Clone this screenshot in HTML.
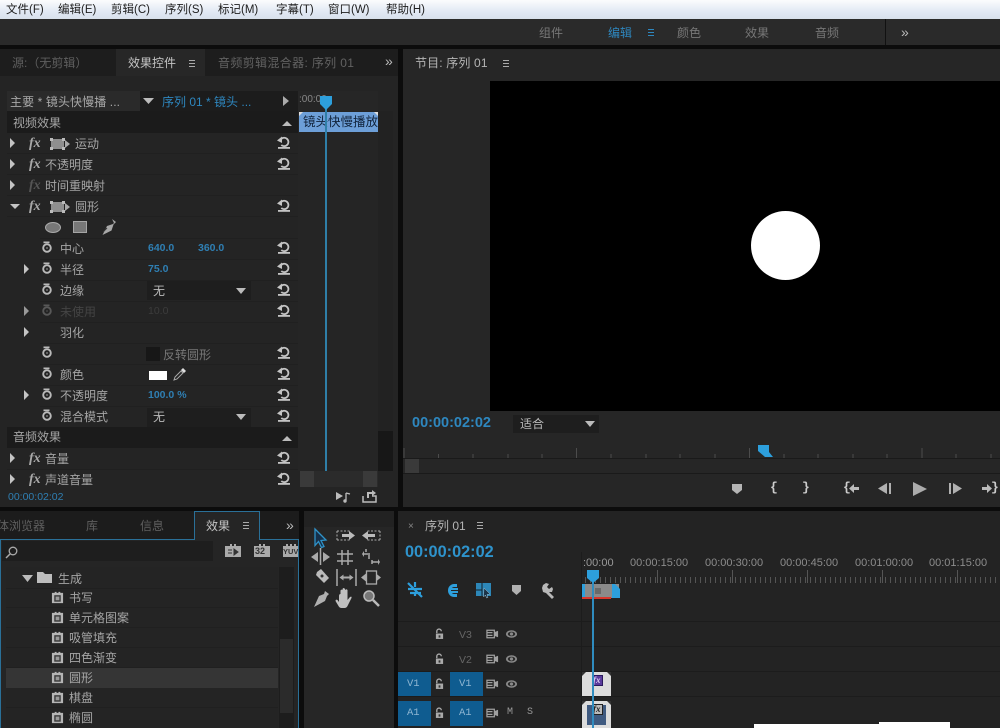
<!DOCTYPE html>
<html><head><meta charset="utf-8"><style>
*{box-sizing:border-box}
html,body{margin:0;padding:0}
body{width:1000px;height:728px;overflow:hidden;position:relative;background:#0c0c0c;font-family:"Liberation Sans","Noto Sans CJK SC",sans-serif;font-size:12px;color:#a5a5a5}
.b{position:absolute}
.t{position:absolute;white-space:nowrap;line-height:14px;font-size:12px;filter:blur(.3px)}
.blue{color:#2f7fb3}
.m{color:#202020;font-size:11.5px;top:3px}
svg.i{position:absolute;overflow:visible}
.fx{position:absolute;font:italic bold 14px "Liberation Serif",serif;color:#a8a8a8;line-height:14px}
.line{position:absolute;height:1px;background:#202020}
.r{font-size:11px;color:#8c8c8c;top:556px}
</style></head><body>
<svg width="0" height="0" style="position:absolute"><defs>
<symbol id="rs" viewBox="0 0 14 14"><path d="M3.500 5a4.200 4.200 0 1 1 .8 5" fill="none" stroke="#c4c4c4" stroke-width="1.800"/><path d="M0 5.500L5 1.500V8Z" fill="#c4c4c4"/><rect x="1" y="12" width="12" height="1.800" fill="#c4c4c4"/></symbol>
<symbol id="sw" viewBox="0 0 12 12"><circle cx="6" cy="7" r="3.800" fill="none" stroke="#bababa" stroke-width="1.900"/><rect x="2.500" y=".5" width="6" height="1.700" fill="#bababa"/><circle cx="6" cy="7" r="1" fill="#777"/></symbol>
<symbol id="mk" viewBox="0 0 16 12"><rect x="1" y="1" width="13" height="10" fill="#8f8f8f"/><path d="M0 0h3v3H0zM12 0h3v3h-3zM0 9h3v3H0zM12 9h3v3h-3z" fill="#bbb"/></symbol>
<symbol id="pl" viewBox="0 0 14 14"><path d="M1 2h3v-1h2v1h2v-1h2v1h3v11H1z" fill="#b5b5b5"/><rect x="3.500" y="4.500" width="7" height="7" fill="#3a3a3a"/><rect x="5" y="6" width="4" height="4" fill="#999"/></symbol>
<symbol id="lk" viewBox="0 0 10 12"><path d="M2 5V3a2.500 2.500 0 0 1 5 0" fill="none" stroke="#aaa" stroke-width="1.500"/><rect x="1" y="5.500" width="8" height="6" fill="#aaa"/><rect x="4" y="7.500" width="2" height="2.500" fill="#333"/></symbol>
<symbol id="ey" viewBox="0 0 14 10"><ellipse cx="7" cy="5" rx="6" ry="4" fill="#8a8a8a"/><ellipse cx="7" cy="5" rx="4" ry="2.400" fill="#2a2a2a"/><circle cx="7" cy="5" r="1.700" fill="#8a8a8a"/></symbol>
<symbol id="fm" viewBox="0 0 14 10"><path d="M1 1h8v8H1zM1 3.500h6M1 6.500h6" fill="none" stroke="#a0a0a0" stroke-width="1.300"/><path d="M9 3l4-1.500v7L9 7z" fill="#a0a0a0"/></symbol>
<symbol id="pen" viewBox="0 0 18 18"><path d="M13 1l4 3-1.500 1.500-1 1-2 6-9 4.500 4.500-9 6-2 1-1z" fill="#a8a8a8"/><path d="M4 14l4-4" stroke="#333" stroke-width="1"/></symbol>
</defs></svg>

<!-- menu -->
<div class="b" style="left:0;top:0;width:1000px;height:19px;background:linear-gradient(#fbfcfd,#e2e9f4 60%,#d8e0ec)"></div>
<div class="t m" style="left:6px">文件(F)</div><div class="t m" style="left:58px">编辑(E)</div><div class="t m" style="left:111px">剪辑(C)</div><div class="t m" style="left:165px">序列(S)</div><div class="t m" style="left:218px">标记(M)</div><div class="t m" style="left:276px">字幕(T)</div><div class="t m" style="left:328px">窗口(W)</div><div class="t m" style="left:386px">帮助(H)</div>

<!-- workspace bar -->
<div class="b" style="left:0;top:19px;width:1000px;height:26px;background:#2a2a2a"></div>
<div class="b" style="left:885px;top:19px;width:1px;height:26px;background:#111"></div>
<div class="t" style="left:539px;top:26px;color:#777">组件</div>
<div class="t" style="left:608px;top:26px;color:#2e87bf">编辑</div>
<div class="b" style="left:648px;top:29px;width:6px;height:7px;border-top:1px solid #2e87bf;border-bottom:1px solid #2e87bf"></div><div class="b" style="left:648px;top:32px;width:6px;height:1px;background:#2e87bf"></div>
<div class="t" style="left:677px;top:26px;color:#777">颜色</div>
<div class="t" style="left:745px;top:26px;color:#777">效果</div>
<div class="t" style="left:815px;top:26px;color:#777">音频</div>
<div class="t" style="left:901px;top:25px;color:#bbb;font-size:14px">»</div>

<!-- left panel -->
<div class="b" style="left:0;top:49px;width:398px;height:458px;background:#242424"></div>
<div class="b" style="left:0;top:49px;width:398px;height:27px;background:#1d1d1d"></div>
<div class="b" style="left:116px;top:49px;width:89px;height:27px;background:#272727"></div>
<div class="t" style="left:12px;top:56px;color:#5f5f5f">源:（无剪辑）</div>
<div class="t" style="left:128px;top:56px;color:#c4c4c4">效果控件</div>
<div class="b" style="left:189px;top:60px;width:6px;height:7px;border-top:1px solid #aaa;border-bottom:1px solid #aaa"></div><div class="b" style="left:189px;top:63px;width:6px;height:1px;background:#aaa"></div>
<div class="t" style="left:218px;top:56px;color:#626262;letter-spacing:.35px">音频剪辑混合器: 序列 01</div>
<div class="t" style="left:385px;top:54px;color:#bbb;font-size:14px">»</div>

<div class="b" style="left:7px;top:91px;width:133px;height:20px;background:#2a2a2a"></div>
<div class="b" style="left:140px;top:91px;width:158px;height:20px;background:#1c1c1c"></div>
<div class="b" style="left:7px;top:111px;width:291px;height:22px;background:#1b1b1b"></div>
<div class="b" style="left:7px;top:427px;width:291px;height:21px;background:#1b1b1b"></div>
<div class="t" style="left:10px;top:95px;color:#a8a8a8;letter-spacing:.1px">主要 * 镜头快慢播 ...</div>
<svg class="i" style="left:143px;top:98px" width="11" height="6"><path d="M0 0h11L5.500 6z" fill="#bbb"/></svg>
<div class="t" style="left:162px;top:95px;color:#2e87bf">序列 01 * 镜头 ...</div>
<svg class="i" style="left:283px;top:96px" width="6" height="10"><path d="M0 0l6 5-6 5z" fill="#aaa"/></svg>
<div class="t" style="left:13px;top:116px">视频效果</div>
<svg class="i" style="left:282px;top:121px" width="10" height="5"><path d="M0 5h10L5 0z" fill="#bbb"/></svg>
<div class="t" style="left:13px;top:430px">音频效果</div>
<svg class="i" style="left:282px;top:436px" width="10" height="5"><path d="M0 5h10L5 0z" fill="#bbb"/></svg>

<!-- row lines -->
<div class="line" style="left:7px;top:153px;width:291px"></div><div class="line" style="left:7px;top:174px;width:291px"></div><div class="line" style="left:7px;top:195px;width:291px"></div><div class="line" style="left:7px;top:216px;width:291px"></div><div class="line" style="left:40px;top:238px;width:258px"></div><div class="line" style="left:40px;top:259px;width:258px"></div><div class="line" style="left:40px;top:280px;width:258px"></div><div class="line" style="left:40px;top:301px;width:258px"></div><div class="line" style="left:40px;top:322px;width:258px"></div><div class="line" style="left:40px;top:343px;width:258px"></div><div class="line" style="left:40px;top:364px;width:258px"></div><div class="line" style="left:40px;top:385px;width:258px"></div><div class="line" style="left:40px;top:406px;width:258px"></div><div class="line" style="left:7px;top:469px;width:291px"></div>

<!-- triangles -->
<svg class="i" style="left:0;top:0" width="40" height="490"><g fill="#c4c4c4"><path d="M10 138l5 5-5 5zM10 159l5 5-5 5zM10 180l5 5-5 5zM10 453l5 5-5 5zM10 474l5 5-5 5z"/><path d="M10 204h10l-5 5z"/><path d="M24 264l5 5-5 5zM24 327l5 5-5 5zM24 390l5 5-5 5z"/><path d="M24 306l5 5-5 5z" fill="#999"/></g></svg>
<div class="fx" style="left:29px;top:137px">fx</div><div class="fx" style="left:29px;top:158px">fx</div><div class="fx" style="left:29px;top:179px;color:#555">fx</div><div class="fx" style="left:29px;top:200px">fx</div><div class="fx" style="left:29px;top:452px">fx</div><div class="fx" style="left:29px;top:473px">fx</div>
<svg class="i" style="left:50px;top:138px" width="16" height="12"><use href="#mk"/></svg><svg class="i" style="left:50px;top:201px" width="16" height="12"><use href="#mk"/></svg>
<svg class="i" style="left:65px;top:140px" width="5" height="8"><path d="M0 0l5 4-5 4z" fill="#aaa"/></svg><svg class="i" style="left:65px;top:203px" width="5" height="8"><path d="M0 0l5 4-5 4z" fill="#aaa"/></svg>
<div class="t" style="left:75px;top:137px">运动</div>
<div class="t" style="left:45px;top:158px">不透明度</div>
<div class="t" style="left:45px;top:179px">时间重映射</div>
<div class="t" style="left:75px;top:200px">圆形</div>
<div class="t" style="left:45px;top:452px">音量</div>
<div class="t" style="left:45px;top:473px">声道音量</div>
<div class="b" style="left:45px;top:222px;width:16px;height:11px;border-radius:50%;background:#777;border:1px solid #aaa"></div>
<div class="b" style="left:73px;top:221px;width:14px;height:12px;background:#777;border:1px solid #a5a5a5"></div>
<svg class="i" style="left:99px;top:218px" width="18" height="18"><use href="#pen"/></svg>

<!-- stopwatches -->
<svg class="i" style="left:41px;top:241px" width="12" height="12"><use href="#sw"/></svg><svg class="i" style="left:41px;top:262px" width="12" height="12"><use href="#sw"/></svg><svg class="i" style="left:41px;top:283px" width="12" height="12"><use href="#sw"/></svg><svg class="i" style="left:41px;top:304px;opacity:.35" width="12" height="12"><use href="#sw"/></svg><svg class="i" style="left:41px;top:346px" width="12" height="12"><use href="#sw"/></svg><svg class="i" style="left:41px;top:367px" width="12" height="12"><use href="#sw"/></svg><svg class="i" style="left:41px;top:388px" width="12" height="12"><use href="#sw"/></svg><svg class="i" style="left:41px;top:409px" width="12" height="12"><use href="#sw"/></svg>
<div class="t" style="left:60px;top:242px">中心</div>
<div class="t" style="left:60px;top:263px">半径</div>
<div class="t" style="left:60px;top:284px">边缘</div>
<div class="t" style="left:60px;top:305px;color:#444">未使用</div>
<div class="t" style="left:60px;top:326px">羽化</div>
<div class="t" style="left:60px;top:368px">颜色</div>
<div class="t" style="left:60px;top:389px">不透明度</div>
<div class="t" style="left:60px;top:410px">混合模式</div>
<div class="t blue" style="left:148px;top:241px;font-size:10.5px;font-weight:bold">640.0</div>
<div class="t blue" style="left:198px;top:241px;font-size:10.5px;font-weight:bold">360.0</div>
<div class="t blue" style="left:148px;top:262px;font-size:10.5px;font-weight:bold">75.0</div>
<div class="t" style="left:148px;top:304px;font-size:10.5px;color:#3c3c3c">10.0</div>
<div class="t blue" style="left:148px;top:388px;font-size:10.5px;font-weight:bold">100.0 %</div>
<div class="b" style="left:147px;top:281px;width:104px;height:19px;background:#1e1e1e"></div>
<div class="t" style="left:153px;top:284px;color:#bbb">无</div>
<svg class="i" style="left:236px;top:288px" width="10" height="6"><path d="M0 0h10L5 6z" fill="#bbb"/></svg>
<div class="b" style="left:147px;top:408px;width:104px;height:19px;background:#1e1e1e"></div>
<div class="t" style="left:153px;top:410px;color:#bbb">无</div>
<svg class="i" style="left:236px;top:414px" width="10" height="6"><path d="M0 0h10L5 6z" fill="#bbb"/></svg>
<div class="b" style="left:146px;top:347px;width:14px;height:14px;background:#171717"></div>
<div class="t" style="left:163px;top:348px;color:#777">反转圆形</div>
<div class="b" style="left:149px;top:371px;width:18px;height:9px;background:#fff"></div>
<svg class="i" style="left:173px;top:367px" width="14" height="14"><path d="M1 13l1-3 6-6 2 2-6 6z" fill="none" stroke="#aaa"/><path d="M8 3l2-2 3 3-2 2z" fill="#ddd"/></svg>

<!-- resets -->
<svg class="i" style="left:277px;top:135px" width="14" height="14"><use href="#rs"/></svg><svg class="i" style="left:277px;top:156px" width="14" height="14"><use href="#rs"/></svg><svg class="i" style="left:277px;top:198px" width="14" height="14"><use href="#rs"/></svg><svg class="i" style="left:277px;top:240px" width="14" height="14"><use href="#rs"/></svg><svg class="i" style="left:277px;top:261px" width="14" height="14"><use href="#rs"/></svg><svg class="i" style="left:277px;top:282px" width="14" height="14"><use href="#rs"/></svg><svg class="i" style="left:277px;top:303px" width="14" height="14"><use href="#rs"/></svg><svg class="i" style="left:277px;top:345px" width="14" height="14"><use href="#rs"/></svg><svg class="i" style="left:277px;top:366px" width="14" height="14"><use href="#rs"/></svg><svg class="i" style="left:277px;top:387px" width="14" height="14"><use href="#rs"/></svg><svg class="i" style="left:277px;top:408px" width="14" height="14"><use href="#rs"/></svg><svg class="i" style="left:277px;top:450px" width="14" height="14"><use href="#rs"/></svg><svg class="i" style="left:277px;top:471px" width="14" height="14"><use href="#rs"/></svg>

<!-- mini timeline -->
<div class="b" style="left:298px;top:91px;width:80px;height:20px;background:#262626"></div>
<div class="t" style="left:299px;top:93px;font-size:10px;color:#888">:00:00</div>
<div class="b" style="left:298px;top:111px;width:80px;height:360px;background:#252525"></div>
<div class="b" style="left:378px;top:111px;width:15px;height:360px;background:#222"></div>
<div class="b" style="left:378px;top:431px;width:15px;height:40px;background:#171717"></div>
<div class="b" style="left:299px;top:112px;width:79px;height:20px;background:#6d9fd8;overflow:hidden;color:#111"><span class="t" style="left:4px;top:3px;color:#10223a;font-size:12.500px">镜头快慢播放</span></div>
<svg class="i" style="left:299px;top:112px" width="79" height="4"><path d="M0 0h4L0 4zM79 0h-4l4 4z" fill="#ddd"/></svg>
<div class="b" style="left:325px;top:100px;width:1.500px;height:371px;background:#2f7fa8"></div>
<svg class="i" style="left:320px;top:96px" width="12" height="14"><path d="M0 0h12v8l-6 6-6-6z" fill="#2d9fdc"/></svg>
<div class="b" style="left:300px;top:471px;width:78px;height:16px;background:#2b2b2b"></div>
<div class="b" style="left:300px;top:471px;width:14px;height:16px;background:#3a3a3a"></div>
<div class="b" style="left:363px;top:471px;width:14px;height:16px;background:#3a3a3a"></div>
<div class="t blue" style="left:8px;top:490px;font-size:10.500px">00:00:02:02</div>
<svg class="i" style="left:335px;top:491px" width="16" height="12"><path d="M1 1l7 4-7 4z" fill="#bbb"/><path d="M11 2v7.500M11 2l4 1" stroke="#bbb" stroke-width="1.300" fill="none"/><circle cx="10" cy="10" r="1.700" fill="#bbb"/></svg>
<svg class="i" style="left:362px;top:490px" width="15" height="13"><path d="M1 6v6h13V6h-4" fill="none" stroke="#bbb" stroke-width="1.500"/><path d="M5 8V2h5V0l4 3-4 3V4H7v4z" fill="#bbb"/></svg>

<!-- program monitor -->
<div class="b" style="left:403px;top:49px;width:597px;height:458px;background:#262626"></div>
<div class="b" style="left:490px;top:81px;width:510px;height:330px;background:#000"></div>
<div class="b" style="left:751px;top:211px;width:69px;height:69px;border-radius:50%;background:#fff"></div>
<div class="t" style="left:415px;top:56px;color:#b5b5b5;letter-spacing:.15px">节目: 序列 01</div>
<div class="b" style="left:503px;top:60px;width:6px;height:7px;border-top:1px solid #aaa;border-bottom:1px solid #aaa"></div><div class="b" style="left:503px;top:63px;width:6px;height:1px;background:#aaa"></div>
<div class="t" style="left:412px;top:416px;color:#2e87bf;font-size:14.500px;font-weight:bold">00:00:02:02</div>
<div class="b" style="left:513px;top:415px;width:86px;height:18px;background:#1e1e1e"></div>
<div class="t" style="left:520px;top:417px;color:#bbb">适合</div>
<svg class="i" style="left:585px;top:421px" width="10" height="6"><path d="M0 0h10L5 6z" fill="#bbb"/></svg>
<div class="b" style="left:403px;top:458px;width:597px;height:1px;background:#1a1a1a"></div>
<div class="b" style="left:403px;top:473px;width:597px;height:1px;background:#1a1a1a"></div>
<div class="b" style="left:405px;top:459px;width:14px;height:14px;background:#3a3a3a"></div>
<svg class="i" style="left:403px;top:445px" width="597" height="13"><g stroke="#4c4c4c"><path d="M1 3v10M35.500 9v4M70 9v4M105 9v4M139 9v4M173.500 3v10M208 9v4M243 9v4M277 9v4M312 9v4M346.500 3v10M381 9v4M415 9v4M450 9v4M484 9v4M519 3v10M553 9v4M588 9v4"/></g></svg>
<svg class="i" style="left:758px;top:445px" width="16" height="13"><path d="M0 0h11v7l4 5H7L0 6z" fill="#2d9fdc"/></svg>
<svg class="i" style="left:732px;top:484px" width="10" height="10"><path d="M0 0h10v6l-5 4-5-4z" fill="#b5b5b5"/></svg>
<div class="t" style="left:770px;top:481px;color:#ccc;font-size:13px;font-weight:bold;font-family:'Liberation Mono',monospace">{</div>
<div class="t" style="left:802px;top:481px;color:#ccc;font-size:13px;font-weight:bold;font-family:'Liberation Mono',monospace">}</div>
<div class="t" style="left:843px;top:481px;color:#ccc;font-size:13px;font-weight:bold;font-family:'Liberation Mono',monospace">{</div>
<svg class="i" style="left:849px;top:484px" width="10" height="9"><path d="M0 4.500L5 0v3h5v3H5v3z" fill="#bbb"/></svg>
<svg class="i" style="left:878px;top:483px" width="14" height="11"><path d="M0 5.500L9 0v11z" fill="#b0b0b0"/><rect x="11" y="0" width="2" height="11" fill="#b0b0b0"/></svg>
<svg class="i" style="left:913px;top:482px" width="14" height="14"><path d="M0 0l14 7-14 7z" fill="#ababab"/></svg>
<svg class="i" style="left:949px;top:483px" width="14" height="11"><rect x="0" y="0" width="2" height="11" fill="#b0b0b0"/><path d="M4 0l9 5.500L4 11z" fill="#b0b0b0"/></svg>
<svg class="i" style="left:982px;top:484px" width="10" height="9"><path d="M10 4.500L5 0v3H0v3h5v3z" fill="#bbb"/></svg>
<div class="t" style="left:991px;top:481px;color:#ccc;font-size:13px;font-weight:bold;font-family:'Liberation Mono',monospace">}</div>

<!-- effects panel -->
<div class="b" style="left:0;top:511px;width:299px;height:217px;background:#1c1c1c"></div>
<div class="b" style="left:0;top:539px;width:299px;height:189px;background:#252525;border:1px solid #2a7098;border-bottom:0"></div>
<div class="b" style="left:194px;top:511px;width:66px;height:29px;background:#252525;border:1px solid #2a7098;border-bottom:0"></div>
<div class="t" style="left:-3px;top:519px;color:#5f5f5f">体浏览器</div>
<div class="t" style="left:86px;top:519px;color:#5f5f5f">库</div>
<div class="t" style="left:140px;top:519px;color:#5f5f5f">信息</div>
<div class="t" style="left:206px;top:519px;color:#c4c4c4">效果</div>
<div class="b" style="left:243px;top:522px;width:6px;height:7px;border-top:1px solid #aaa;border-bottom:1px solid #aaa"></div><div class="b" style="left:243px;top:525px;width:6px;height:1px;background:#aaa"></div>
<div class="t" style="left:286px;top:518px;color:#bbb;font-size:14px">»</div>
<div class="b" style="left:2px;top:541px;width:211px;height:20px;background:#1e1e1e"></div>
<svg class="i" style="left:5px;top:546px" width="13" height="13"><circle cx="8" cy="5" r="3.800" fill="none" stroke="#aaa" stroke-width="1.300"/><path d="M5 8l-4 4" stroke="#aaa" stroke-width="1.500"/></svg>
<svg class="i" style="left:225px;top:544px" width="16" height="13"><path d="M0 2h5V0h2v2h2V0h2v2h5v11H0z" fill="#aaa"/><path d="M9 5l4 3-4 3zM3 6h4M3 9h4" fill="#333" stroke="#333"/></svg>
<svg class="i" style="left:254px;top:544px" width="16" height="13"><path d="M0 2h5V0h2v2h2V0h2v2h5v11H0z" fill="#aaa"/></svg>
<div class="t" style="left:255px;top:546px;font-size:9px;font-weight:bold;color:#333;line-height:11px">32</div>
<svg class="i" style="left:283px;top:544px" width="15" height="13"><path d="M0 2h3V0h2v2h2V0h2v2h2V0h2v2h2v11H0z" fill="#aaa"/></svg>
<div class="t" style="left:283px;top:547px;font-size:7.500px;font-weight:bold;color:#333;line-height:9px">YUV</div>
<div class="b" style="left:6px;top:567px;width:272px;height:161px;background:#242424"></div>
<div class="b" style="left:279px;top:567px;width:15px;height:161px;background:#1d1d1d"></div>
<div class="b" style="left:280px;top:639px;width:13px;height:74px;background:#2b2b2b"></div>
<div class="b" style="left:6px;top:668px;width:272px;height:20px;background:#353535"></div>
<div class="line" style="left:6px;top:607px;width:272px"></div><div class="line" style="left:6px;top:627px;width:272px"></div><div class="line" style="left:6px;top:647px;width:272px"></div><div class="line" style="left:6px;top:667px;width:272px"></div><div class="line" style="left:6px;top:707px;width:272px"></div><div class="line" style="left:6px;top:588px;width:272px"></div>
<svg class="i" style="left:22px;top:575px" width="11" height="7"><path d="M0 0h11L5.500 7z" fill="#bbb"/></svg>
<svg class="i" style="left:37px;top:571px" width="15" height="12"><path d="M0 1h6l2 2h7v9H0z" fill="#bdbdbd"/></svg>
<div class="t" style="left:58px;top:572px">生成</div>
<svg class="i" style="left:51px;top:591px" width="13" height="13"><use href="#pl"/></svg><svg class="i" style="left:51px;top:611px" width="13" height="13"><use href="#pl"/></svg><svg class="i" style="left:51px;top:631px" width="13" height="13"><use href="#pl"/></svg><svg class="i" style="left:51px;top:651px" width="13" height="13"><use href="#pl"/></svg><svg class="i" style="left:51px;top:671px" width="13" height="13"><use href="#pl"/></svg><svg class="i" style="left:51px;top:691px" width="13" height="13"><use href="#pl"/></svg><svg class="i" style="left:51px;top:711px" width="13" height="13"><use href="#pl"/></svg>
<div class="t" style="left:69px;top:591px">书写</div>
<div class="t" style="left:69px;top:611px">单元格图案</div>
<div class="t" style="left:69px;top:631px">吸管填充</div>
<div class="t" style="left:69px;top:651px">四色渐变</div>
<div class="t" style="left:69px;top:671px">圆形</div>
<div class="t" style="left:69px;top:691px">棋盘</div>
<div class="t" style="left:69px;top:711px">椭圆</div>

<!-- tools -->
<div class="b" style="left:304px;top:511px;width:90px;height:217px;background:#262626"></div>
<div class="b" style="left:304px;top:511px;width:90px;height:16px;background:#222"></div>
<svg class="i" style="left:304px;top:520px" width="90" height="100">
<path d="M11 9l11 11-5 .5 3 6-2.500 1-3-6-3.500 4z" fill="#16304a" stroke="#2f93c9" stroke-width="1.300"/>
<path d="M33 11h13M33 20h13M33 11v9" stroke="#aaa" stroke-dasharray="2 1.500" fill="none"/><path d="M38 14h7v-3l6 4.500-6 4.500v-3h-7z" fill="#bbb"/>
<path d="M76 11h-13M76 20h-13M76 11v9" stroke="#aaa" stroke-dasharray="2 1.500" fill="none"/><path d="M58 15.500l6-4.500v3h7v3h-7v3z" fill="#bbb"/>
<path d="M16.500 28v17" stroke="#aaa" stroke-width="1.500"/><path d="M7 37l7-5v10zM26 37l-7-5v10z" fill="#aaa"/>
<path d="M38 30v15M44 30v15M33 34h16M33 41h16" stroke="#aaa" stroke-width="1.500"/>
<path d="M62 29v3M65 33v6M68 40v4M59 34h5M68 42h6" stroke="#aaa" stroke-width="1.500"/><path d="M60 31l-2 3 2 3zM74 39l2 3-2 3z" fill="#aaa"/>
<path d="M13 52l4-3 8 9-5 5-8-8z" fill="#bbb"/><circle cx="18" cy="56" r="1.500" fill="#333"/>
<path d="M33 49v17M52 49v17" stroke="#aaa" stroke-width="1.500"/><path d="M35.500 57.500l4-3v2h6v-2l4 3-4 3v-2h-6v2z" fill="#aaa"/>
<rect x="62.500" y="51" width="10" height="13" fill="none" stroke="#aaa" stroke-width="1.300"/><path d="M57 57.500l5-4v8zM77 57.500l-5-4v8z" fill="#aaa"/>
<path d="M21 71l4 3-2 2-2 5-11 6 5-11 5-2z" fill="#b0b0b0"/>
<path d="M35 82v-6q0-2 1.500-2v5-8q0-2 2-1v7-8q1-2 2.500 0v8-7q1.500-1.500 2.500 0v10l2.500-3q2-1 1.500 1l-4 8q-1 2-3 2h-3q-2 0-3-2l-3-5q0-2 2-1z" fill="#c0c0c0"/>
<circle cx="65" cy="76" r="5" fill="#777" stroke="#bbb" stroke-width="1.500"/><path d="M69 80l6 6" stroke="#bbb" stroke-width="2.500"/>
</svg>

<!-- timeline -->
<div class="b" style="left:398px;top:511px;width:602px;height:217px;background:#232323"></div>
<div class="t" style="left:408px;top:520px;font-size:10px;color:#888">×</div>
<div class="t" style="left:425px;top:519px;color:#b5b5b5">序列 01</div>
<div class="b" style="left:477px;top:522px;width:6px;height:7px;border-top:1px solid #aaa;border-bottom:1px solid #aaa"></div><div class="b" style="left:477px;top:525px;width:6px;height:1px;background:#aaa"></div>
<div class="t" style="left:405px;top:544px;color:#2e93cc;font-size:16.300px;font-weight:bold;line-height:16px">00:00:02:02</div>
<svg class="i" style="left:405px;top:580px" width="155" height="20">
<path d="M3 3l14 14M3 9h14M5 13h11M10 2v5M10 12v4" stroke="#2d9fdc" stroke-width="2.200" fill="none"/>
<path d="M49 4a6 6.500 0 1 0 0 13h3v-3h-3a3 3.500 0 1 1 0-7h3V4z" fill="#2d9fdc"/><rect x="46" y="8" width="7" height="2" fill="#2d9fdc"/><rect x="46" y="11" width="7" height="2" fill="#2d9fdc"/>
<rect x="71" y="3" width="15" height="13" fill="#2d87b8"/><path d="M71 10h6M77 3v13" stroke="#14202a"/><path d="M79 8l6 6-3 .5 1 3-1.500.5-1-3-2 2z" fill="#1c3448" stroke="#9bc" stroke-width=".5"/>
<path d="M107 5h9v6l-4.500 4-4.500-4z" fill="#b0b0b0"/>
<path d="M138 5l3-2 3 1-2 3 2 2 3-2 1 2-1 3-3 0 5 5-2 2-6-6-3-1-1-4z" fill="#b8b8b8"/>
</svg>
<div class="t r" style="left:583px;color:#999">:00:00</div>
<div class="t r" style="left:630px">00:00:15:00</div>
<div class="t r" style="left:705px">00:00:30:00</div>
<div class="t r" style="left:780px">00:00:45:00</div>
<div class="t r" style="left:855px">00:01:00:00</div>
<div class="t r" style="left:929px">00:01:15:00</div>
<div class="b" style="left:585px;top:577px;width:415px;height:6px;background:repeating-linear-gradient(90deg,#555 0,#555 1px,transparent 1px,transparent 5px)"></div>
<div class="b" style="left:657px;top:570px;width:343px;height:13px;background:repeating-linear-gradient(90deg,#555 0,#555 1px,transparent 1px,transparent 75px)"></div>
<div class="b" style="left:582px;top:584px;width:37px;height:14px;background:#8a8a8a"></div>
<div class="b" style="left:582px;top:584px;width:3px;height:14px;background:#2d9fdc"></div>
<svg class="i" style="left:612px;top:584px" width="8" height="14"><path d="M0 0h3l5 5v9H0z" fill="#2d9fdc"/></svg>
<div class="b" style="left:582px;top:597px;width:29px;height:2px;background:#d8362c"></div>
<div class="b" style="left:595px;top:588px;width:6px;height:6px;background:#6a6a6a"></div>
<div class="line" style="left:398px;top:621px;width:602px;background:#1c1c1c"></div><div class="line" style="left:398px;top:646px;width:602px;background:#1c1c1c"></div><div class="line" style="left:398px;top:671px;width:602px;background:#1c1c1c"></div><div class="line" style="left:398px;top:696px;width:602px;background:#1c1c1c"></div>
<div class="b" style="left:581px;top:552px;width:1px;height:176px;background:#1c1c1c"></div>
<div class="b" style="left:398px;top:672px;width:33px;height:24px;background:#0f5c90"></div>
<div class="b" style="left:450px;top:672px;width:33px;height:24px;background:#0f5c90"></div>
<div class="b" style="left:398px;top:701px;width:33px;height:25px;background:#0f5c90"></div>
<div class="b" style="left:450px;top:701px;width:33px;height:25px;background:#0f5c90"></div>
<div class="t" style="left:407px;top:677px;font-size:10.500px;color:#8fb6d2;font-family:'Liberation Mono',monospace">V1</div><div class="t" style="left:459px;top:677px;font-size:10.500px;color:#8fb6d2;font-family:'Liberation Mono',monospace">V1</div><div class="t" style="left:407px;top:706px;font-size:10.500px;color:#8fb6d2;font-family:'Liberation Mono',monospace">A1</div><div class="t" style="left:459px;top:706px;font-size:10.500px;color:#8fb6d2;font-family:'Liberation Mono',monospace">A1</div>
<div class="t" style="left:459px;top:628px;font-size:10.500px;color:#666">V3</div><div class="t" style="left:459px;top:653px;font-size:10.500px;color:#666">V2</div>
<svg class="i" style="left:435px;top:628px" width="9" height="12"><use href="#lk"/></svg><svg class="i" style="left:435px;top:653px" width="9" height="12"><use href="#lk"/></svg><svg class="i" style="left:435px;top:678px" width="9" height="12"><use href="#lk"/></svg><svg class="i" style="left:435px;top:707px" width="9" height="12"><use href="#lk"/></svg>
<svg class="i" style="left:486px;top:629px" width="13" height="10"><use href="#fm"/></svg><svg class="i" style="left:486px;top:654px" width="13" height="10"><use href="#fm"/></svg><svg class="i" style="left:486px;top:679px" width="13" height="10"><use href="#fm"/></svg><svg class="i" style="left:486px;top:708px" width="13" height="10"><use href="#fm"/></svg>
<svg class="i" style="left:505px;top:629px" width="13" height="10"><use href="#ey"/></svg><svg class="i" style="left:505px;top:654px" width="13" height="10"><use href="#ey"/></svg><svg class="i" style="left:505px;top:679px" width="13" height="10"><use href="#ey"/></svg>
<div class="t" style="left:507px;top:706px;font-size:10px;color:#999;font-family:'Liberation Mono',monospace">M</div><div class="t" style="left:527px;top:706px;font-size:10px;color:#999;font-family:'Liberation Mono',monospace">S</div>
<div class="b" style="left:582px;top:672px;width:29px;height:24px;background:#dcdcdc"></div>
<div class="b" style="left:592px;top:675px;width:11px;height:11px;background:#5a3a9c;border:1px solid #2a1a5c"></div>
<div class="b" style="left:582px;top:701px;width:29px;height:27px;background:#dcdcdc"></div>
<div class="b" style="left:587px;top:705px;width:19px;height:20px;background:#3f5a80"></div>
<div class="b" style="left:592px;top:704px;width:11px;height:11px;background:#bbb;border:1px solid #222"></div>
<svg class="i" style="left:582px;top:672px" width="29" height="34"><path d="M0 0h4L0 4zM29 0h-4l4 4zM0 29h4l-4 4zM29 29h-4l4 4z" fill="#333"/></svg>
<div class="t" style="left:593px;top:675px;font:italic bold 9px/10px 'Liberation Serif',serif;color:#d8c8f0">fx</div>
<div class="t" style="left:593px;top:704px;font:italic bold 9px/10px 'Liberation Serif',serif;color:#222">fx</div>
<div class="b" style="left:592px;top:578px;width:1.500px;height:150px;background:#2f8cbf"></div>
<svg class="i" style="left:587px;top:570px" width="12" height="13"><path d="M0 0h12v8l-6 5-6-5z" fill="#2d9fdc"/></svg>
<div class="b" style="left:754px;top:724px;width:125px;height:4px;background:#fff"></div>
<div class="b" style="left:879px;top:722px;width:71px;height:6px;background:#fff"></div>
</body></html>
